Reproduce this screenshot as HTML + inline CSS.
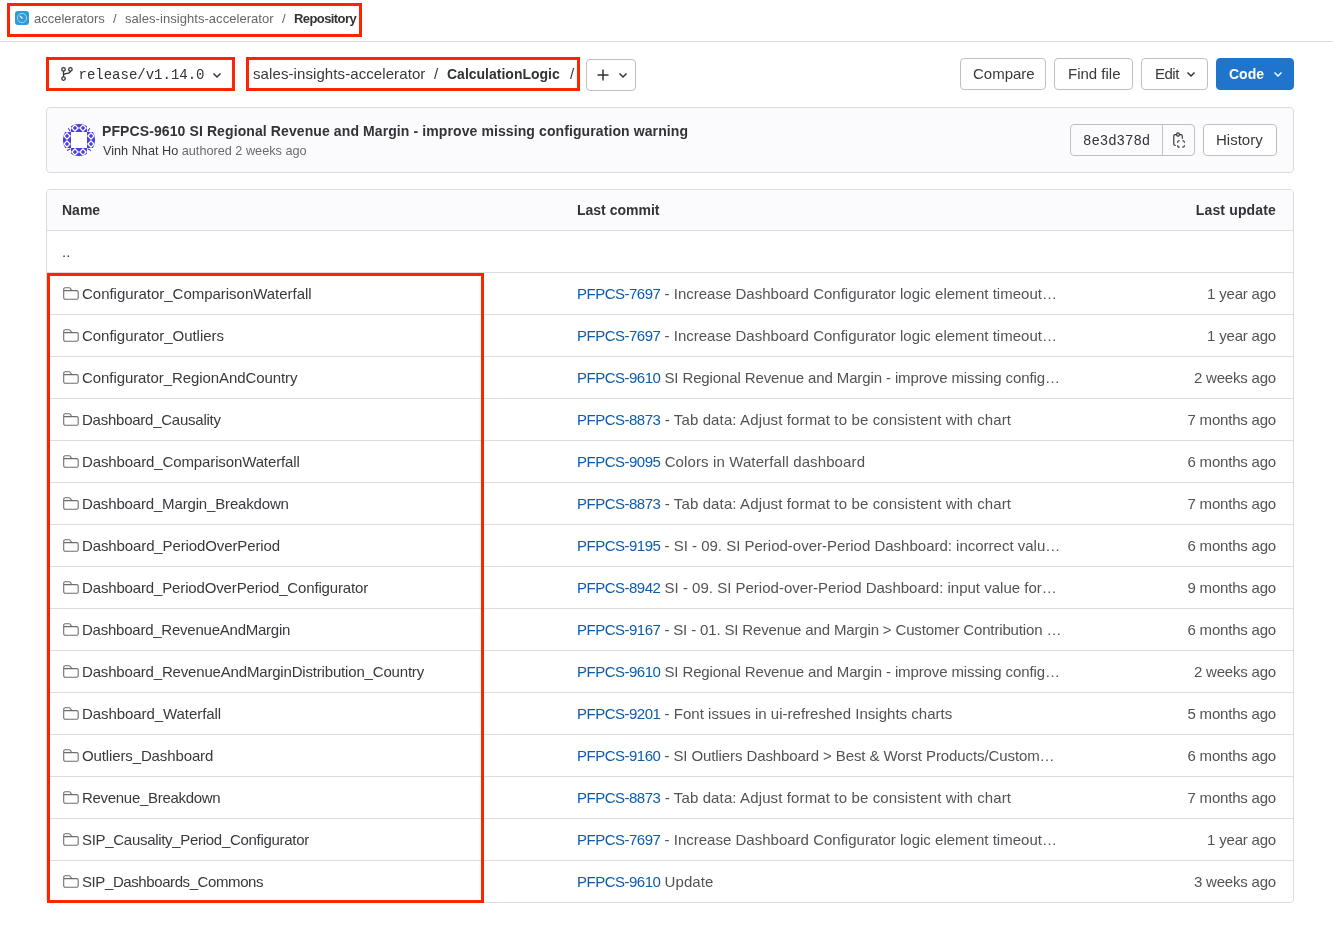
<!DOCTYPE html>
<html><head><meta charset="utf-8">
<style>
*{box-sizing:border-box;margin:0;padding:0}
html,body{width:1333px;height:952px;overflow:hidden;background:#fff}
#wrap{position:absolute;left:0;top:0;width:1333px;height:952px;will-change:transform}
body{font-family:"Liberation Sans",sans-serif;color:#3a383f;position:relative;font-size:15px}
.abs{position:absolute}
.red{position:absolute;border:3px solid #ff2400;pointer-events:none}
.hdr{position:absolute;left:0;top:0;width:1333px;height:42px;border-bottom:1px solid #dcdcde}
.bc{position:absolute;top:11px;font-size:13px;color:#66656b;white-space:nowrap;line-height:16px}
.btn{position:absolute;top:58px;height:32px;border:1px solid #bfbfc3;border-radius:4px;background:#fff;font-size:15px;line-height:30px;color:#3a383f;white-space:nowrap}
.btn span{position:absolute;top:0}
.chev{position:absolute}
.commit{position:absolute;left:46px;top:107px;width:1248px;height:66px;border:1px solid #dcdcde;border-radius:4px;background:#fbfafd}
.tbl{position:absolute;left:46px;top:189px;width:1248px;height:714px;border:1px solid #dcdcde;border-radius:4px;overflow:hidden}
.th{position:absolute;left:0;top:0;width:1246px;height:41px;background:#fbfafd;border-bottom:1px solid #dcdcde}
.th b{position:absolute;top:12px;font-size:14px;line-height:16px;color:#333238}
.row{position:absolute;left:0;width:1246px;height:42px;border-bottom:1px solid #dcdcde}
.row .nm{position:absolute;left:35px;top:12px;font-size:15px;line-height:18px;color:#3a383f;white-space:nowrap}
.row .ic{position:absolute;left:16px;top:14px;overflow:visible}
.row .cm{position:absolute;left:530px;top:12px;font-size:15px;line-height:18px;color:#535258;white-space:nowrap}
.row .cm a{color:#0b5cad;text-decoration:none;letter-spacing:-0.5px}
.row .tm{position:absolute;right:17px;top:12px;font-size:15px;line-height:18px;color:#535258;white-space:nowrap;letter-spacing:-0.2px}
</style></head><body><div id="wrap">

<div class="hdr">
  <div class="abs" style="left:15px;top:11px;width:14px;height:14px;border-radius:3px;background:#2f9ad6">
    <svg width="14" height="14" viewBox="0 0 14 14" style="position:absolute;left:0;top:0"><circle cx="7" cy="7" r="4.6" fill="none" stroke="#bfe0f5" stroke-width="0.8"/><path d="M5.2 5.2 L7.2 7.2" stroke="#dff0fb" stroke-width="1.3" stroke-linecap="round"/></svg>
  </div>
  <div class="bc" style="left:34px">accelerators</div>
  <div class="bc" style="left:113px">/</div>
  <div class="bc" style="left:125px;letter-spacing:0.05px">sales-insights-accelerator</div>
  <div class="bc" style="left:282px">/</div>
  <div class="bc" style="left:294px;color:#333238;font-weight:bold;letter-spacing:-0.58px">Repository</div>
</div>
<div class="red" style="left:7px;top:3px;width:355px;height:34px"></div>

<!-- branch button -->
<div class="btn" style="left:46px;width:188px">
  <svg class="abs" style="left:10px;top:5px" width="20" height="20" viewBox="57 64 20 20"><g fill="none" stroke="#333238" stroke-width="1.25"><circle cx="63.5" cy="69.4" r="1.75"/><circle cx="70.4" cy="69.4" r="1.75"/><circle cx="63.5" cy="78.5" r="1.75"/><path d="M63.5 71.15V76.75"/><path d="M63.5 74.6C64.2 73.9 65.2 73.6 67.2 73.4C69.2 73.2 70.2 72.5 70.4 71.15"/></g></svg>
  <span style="left:31.5px;top:1px;font-family:'Liberation Mono',monospace;font-size:14px;color:#333238">release/v1.14.0</span>
  <svg class="chev" style="left:165px;top:10.5px" width="10" height="10" viewBox="0 0 10 10"><path d="M1.5 3.5L5 7L8.5 3.5" fill="none" stroke="#333238" stroke-width="1.5"/></svg>
</div>
<div class="red" style="left:46px;top:57px;width:189px;height:34px"></div>

<!-- path breadcrumb -->
<div class="abs" style="left:253px;top:65px;font-size:15px;line-height:18px;white-space:nowrap;color:#3a383f;letter-spacing:0.09px">sales-insights-accelerator</div>
<div class="abs" style="left:434px;top:65px;font-size:15px;line-height:18px;color:#3a383f">/</div>
<div class="abs" style="left:447px;top:65px;font-size:14px;line-height:18px;font-weight:bold;color:#333238">CalculationLogic</div>
<div class="abs" style="left:570px;top:65px;font-size:15px;line-height:18px;color:#3a383f">/</div>
<div class="red" style="left:246px;top:57px;width:334px;height:34px"></div>

<div class="btn" style="left:586px;width:50px;top:59px">
  <svg class="abs" style="left:10px;top:9px" width="12" height="12" viewBox="0 0 12 12"><path d="M6 0.5v11M0.5 6h11" stroke="#333238" stroke-width="1.5"/></svg>
  <svg class="chev" style="left:31px;top:10px" width="10" height="10" viewBox="0 0 10 10"><path d="M1.5 3.5L5 7L8.5 3.5" fill="none" stroke="#333238" stroke-width="1.5"/></svg>
</div>

<div class="btn" style="left:960px;width:86px"><span style="left:12px">Compare</span></div>
<div class="btn" style="left:1054px;width:79px"><span style="left:13px">Find file</span></div>
<div class="btn" style="left:1141px;width:67px"><span style="left:13px;letter-spacing:-0.5px">Edit</span>
  <svg class="chev" style="left:44px;top:10px" width="10" height="10" viewBox="0 0 10 10"><path d="M1.5 3.5L5 7L8.5 3.5" fill="none" stroke="#333238" stroke-width="1.5"/></svg></div>
<div class="btn" style="left:1216px;width:78px;background:#1f75cb;border-color:#1f75cb;color:#fff"><span style="left:12px;font-weight:bold;font-size:14px">Code</span>
  <svg class="chev" style="left:55.5px;top:10px" width="10" height="10" viewBox="0 0 10 10"><path d="M1.5 3.5L5 7L8.5 3.5" fill="none" stroke="#fff" stroke-width="1.5"/></svg></div>

<!-- commit box -->
<div class="commit">
  <svg class="abs" style="left:16px;top:15.5px" width="32" height="32" viewBox="0 0 32 32"><defs><clipPath id="av"><circle cx="16" cy="16" r="16"/></clipPath></defs><g clip-path="url(#av)"><rect width="32" height="32" fill="#fff"/><rect x="8" y="0" width="8" height="8" fill="#4b3de3"/><path d="M12 0.9L15.1 4L12 7.1L8.9 4Z" fill="none" stroke="#fff" stroke-width="1.3"/><circle cx="12" cy="4" r="1.1" fill="#4b3de3"/><rect x="16" y="0" width="8" height="8" fill="#4b3de3"/><path d="M20 0.9L23.1 4L20 7.1L16.9 4Z" fill="none" stroke="#fff" stroke-width="1.3"/><circle cx="20" cy="4" r="1.1" fill="#4b3de3"/><rect x="0" y="8" width="8" height="8" fill="#4b3de3"/><path d="M4 8.9L7.1 12L4 15.1L0.9 12Z" fill="none" stroke="#fff" stroke-width="1.3"/><circle cx="4" cy="12" r="1.1" fill="#4b3de3"/><rect x="0" y="16" width="8" height="8" fill="#4b3de3"/><path d="M4 16.9L7.1 20L4 23.1L0.9 20Z" fill="none" stroke="#fff" stroke-width="1.3"/><circle cx="4" cy="20" r="1.1" fill="#4b3de3"/><rect x="24" y="8" width="8" height="8" fill="#4b3de3"/><path d="M28 8.9L31.1 12L28 15.1L24.9 12Z" fill="none" stroke="#fff" stroke-width="1.3"/><circle cx="28" cy="12" r="1.1" fill="#4b3de3"/><rect x="24" y="16" width="8" height="8" fill="#4b3de3"/><path d="M28 16.9L31.1 20L28 23.1L24.9 20Z" fill="none" stroke="#fff" stroke-width="1.3"/><circle cx="28" cy="20" r="1.1" fill="#4b3de3"/><rect x="8" y="24" width="8" height="8" fill="#4b3de3"/><path d="M12 24.9L15.1 28L12 31.1L8.9 28Z" fill="none" stroke="#fff" stroke-width="1.3"/><circle cx="12" cy="28" r="1.1" fill="#4b3de3"/><rect x="16" y="24" width="8" height="8" fill="#4b3de3"/><path d="M20 24.9L23.1 28L20 31.1L16.9 28Z" fill="none" stroke="#fff" stroke-width="1.3"/><circle cx="20" cy="28" r="1.1" fill="#4b3de3"/><path d="M5.2 4.2L6.9 6.9M26.8 4.2L25.1 6.9M4.2 26.6L6.9 25.1M27.8 26.6L25.1 25.1" stroke="#4b3de3" stroke-width="1.1" stroke-linecap="round"/></g><circle cx="16" cy="16" r="15.75" fill="none" stroke="rgba(0,0,0,0.06)" stroke-width="0.5"/></svg>
  <div class="abs" style="left:55px;top:14px;font-size:14px;line-height:18px;font-weight:bold;color:#333238;white-space:nowrap;letter-spacing:0.1px">PFPCS-9610 SI Regional Revenue and Margin - improve missing configuration warning</div>
  <div class="abs" style="left:56px;top:35px;font-size:12.7px;line-height:16px;color:#6a696f;white-space:nowrap"><span style="color:#3a383f">Vinh Nhat Ho</span> authored 2 weeks ago</div>
  <div class="abs" style="left:1023px;top:16px;width:93px;height:32px;border:1px solid #bfbfc3;border-radius:4px 0 0 4px;background:#fbfafd;font-family:'Liberation Mono',monospace;font-size:14px;line-height:30px;color:#333238;padding-left:12px;padding-top:1px">8e3d378d</div>
  <div class="abs" style="left:1115px;top:16px;width:33px;height:32px;border:1px solid #bfbfc3;border-radius:0 4px 4px 0;background:#fbfafd"></div>
  <svg class="abs" style="left:1119px;top:20px" width="26" height="24" viewBox="1166 128 26 24"><g fill="none" stroke="#333238" stroke-width="1.15" stroke-linecap="round"><path d="M1175.3 145.3H1175.1A1.3 1.3 0 0 1 1173.8 144V135.9A1.3 1.3 0 0 1 1175.1 134.6H1176.4"/><path d="M1179.6 134.6H1181A1.3 1.3 0 0 1 1182.3 135.9V138.3"/><rect x="1176.7" y="132.9" width="2.6" height="3.2" rx="1"/><path d="M1177.7 142.3V141.9A1.2 1.2 0 0 1 1178.9 140.7H1179.3"/><path d="M1182.7 140.7H1183.1A1.2 1.2 0 0 1 1184.3 141.9V142.3"/><path d="M1184.3 145.5V145.9A1.2 1.2 0 0 1 1183.1 147.1H1182.7"/><path d="M1179.3 147.1H1178.9A1.2 1.2 0 0 1 1177.7 145.9V145.5"/></g></svg>
  <div class="abs" style="left:1156px;top:16px;width:74px;height:32px;border:1px solid #bfbfc3;border-radius:4px;background:#fff;font-size:15px;line-height:30px;color:#3a383f;padding-left:12px">History</div>
</div>

<!-- table -->
<div class="tbl">
  <div class="th"><b style="left:15px">Name</b><b style="left:530px">Last commit</b><b style="right:17px;letter-spacing:0.15px">Last update</b></div>
  <div class="row" style="top:41px"><div class="nm" style="left:15px">..</div></div>
  <!--ROWS-->
  <div class="row" style="top:83px"><svg class="ic" width="16" height="16" viewBox="0 0 16 16"><path d="M0.7 3.6V2.2A1.5 1.5 0 0 1 2.2 0.7H6.2Q6.8 0.7 7.2 1.3L8.8 3.6H13.7A1.5 1.5 0 0 1 15.2 5.1V10.7A1.5 1.5 0 0 1 13.7 12.2H2.2A1.5 1.5 0 0 1 0.7 10.7ZM0.7 3.6H8.8" fill="none" stroke="#6e6d73" stroke-width="1.1" stroke-linejoin="round"/></svg><div class="nm" style="letter-spacing:-0.023px">Configurator_ComparisonWaterfall</div><div class="cm"><a>PFPCS-7697</a><span style="letter-spacing:0.009px"> - Increase Dashboard Configurator logic element timeout&#8230;</span></div><div class="tm">1 year ago</div></div>
  <div class="row" style="top:125px"><svg class="ic" width="16" height="16" viewBox="0 0 16 16"><path d="M0.7 3.6V2.2A1.5 1.5 0 0 1 2.2 0.7H6.2Q6.8 0.7 7.2 1.3L8.8 3.6H13.7A1.5 1.5 0 0 1 15.2 5.1V10.7A1.5 1.5 0 0 1 13.7 12.2H2.2A1.5 1.5 0 0 1 0.7 10.7ZM0.7 3.6H8.8" fill="none" stroke="#6e6d73" stroke-width="1.1" stroke-linejoin="round"/></svg><div class="nm" style="letter-spacing:-0.030px">Configurator_Outliers</div><div class="cm"><a>PFPCS-7697</a><span style="letter-spacing:0.009px"> - Increase Dashboard Configurator logic element timeout&#8230;</span></div><div class="tm">1 year ago</div></div>
  <div class="row" style="top:167px"><svg class="ic" width="16" height="16" viewBox="0 0 16 16"><path d="M0.7 3.6V2.2A1.5 1.5 0 0 1 2.2 0.7H6.2Q6.8 0.7 7.2 1.3L8.8 3.6H13.7A1.5 1.5 0 0 1 15.2 5.1V10.7A1.5 1.5 0 0 1 13.7 12.2H2.2A1.5 1.5 0 0 1 0.7 10.7ZM0.7 3.6H8.8" fill="none" stroke="#6e6d73" stroke-width="1.1" stroke-linejoin="round"/></svg><div class="nm" style="letter-spacing:-0.075px">Configurator_RegionAndCountry</div><div class="cm"><a>PFPCS-9610</a><span style="letter-spacing:-0.116px"> SI Regional Revenue and Margin - improve missing config&#8230;</span></div><div class="tm">2 weeks ago</div></div>
  <div class="row" style="top:209px"><svg class="ic" width="16" height="16" viewBox="0 0 16 16"><path d="M0.7 3.6V2.2A1.5 1.5 0 0 1 2.2 0.7H6.2Q6.8 0.7 7.2 1.3L8.8 3.6H13.7A1.5 1.5 0 0 1 15.2 5.1V10.7A1.5 1.5 0 0 1 13.7 12.2H2.2A1.5 1.5 0 0 1 0.7 10.7ZM0.7 3.6H8.8" fill="none" stroke="#6e6d73" stroke-width="1.1" stroke-linejoin="round"/></svg><div class="nm" style="letter-spacing:-0.245px">Dashboard_Causality</div><div class="cm"><a>PFPCS-8873</a><span style="letter-spacing:0.124px"> - Tab data: Adjust format to be consistent with chart</span></div><div class="tm">7 months ago</div></div>
  <div class="row" style="top:251px"><svg class="ic" width="16" height="16" viewBox="0 0 16 16"><path d="M0.7 3.6V2.2A1.5 1.5 0 0 1 2.2 0.7H6.2Q6.8 0.7 7.2 1.3L8.8 3.6H13.7A1.5 1.5 0 0 1 15.2 5.1V10.7A1.5 1.5 0 0 1 13.7 12.2H2.2A1.5 1.5 0 0 1 0.7 10.7ZM0.7 3.6H8.8" fill="none" stroke="#6e6d73" stroke-width="1.1" stroke-linejoin="round"/></svg><div class="nm" style="letter-spacing:-0.121px">Dashboard_ComparisonWaterfall</div><div class="cm"><a>PFPCS-9095</a><span style="letter-spacing:0.118px"> Colors in Waterfall dashboard</span></div><div class="tm">6 months ago</div></div>
  <div class="row" style="top:293px"><svg class="ic" width="16" height="16" viewBox="0 0 16 16"><path d="M0.7 3.6V2.2A1.5 1.5 0 0 1 2.2 0.7H6.2Q6.8 0.7 7.2 1.3L8.8 3.6H13.7A1.5 1.5 0 0 1 15.2 5.1V10.7A1.5 1.5 0 0 1 13.7 12.2H2.2A1.5 1.5 0 0 1 0.7 10.7ZM0.7 3.6H8.8" fill="none" stroke="#6e6d73" stroke-width="1.1" stroke-linejoin="round"/></svg><div class="nm" style="letter-spacing:-0.160px">Dashboard_Margin_Breakdown</div><div class="cm"><a>PFPCS-8873</a><span style="letter-spacing:0.124px"> - Tab data: Adjust format to be consistent with chart</span></div><div class="tm">7 months ago</div></div>
  <div class="row" style="top:335px"><svg class="ic" width="16" height="16" viewBox="0 0 16 16"><path d="M0.7 3.6V2.2A1.5 1.5 0 0 1 2.2 0.7H6.2Q6.8 0.7 7.2 1.3L8.8 3.6H13.7A1.5 1.5 0 0 1 15.2 5.1V10.7A1.5 1.5 0 0 1 13.7 12.2H2.2A1.5 1.5 0 0 1 0.7 10.7ZM0.7 3.6H8.8" fill="none" stroke="#6e6d73" stroke-width="1.1" stroke-linejoin="round"/></svg><div class="nm" style="letter-spacing:-0.112px">Dashboard_PeriodOverPeriod</div><div class="cm"><a>PFPCS-9195</a><span style="letter-spacing:-0.005px"> - SI - 09. SI Period-over-Period Dashboard: incorrect valu&#8230;</span></div><div class="tm">6 months ago</div></div>
  <div class="row" style="top:377px"><svg class="ic" width="16" height="16" viewBox="0 0 16 16"><path d="M0.7 3.6V2.2A1.5 1.5 0 0 1 2.2 0.7H6.2Q6.8 0.7 7.2 1.3L8.8 3.6H13.7A1.5 1.5 0 0 1 15.2 5.1V10.7A1.5 1.5 0 0 1 13.7 12.2H2.2A1.5 1.5 0 0 1 0.7 10.7ZM0.7 3.6H8.8" fill="none" stroke="#6e6d73" stroke-width="1.1" stroke-linejoin="round"/></svg><div class="nm" style="letter-spacing:-0.147px">Dashboard_PeriodOverPeriod_Configurator</div><div class="cm"><a>PFPCS-8942</a><span style="letter-spacing:0.007px"> SI - 09. SI Period-over-Period Dashboard: input value for&#8230;</span></div><div class="tm">9 months ago</div></div>
  <div class="row" style="top:419px"><svg class="ic" width="16" height="16" viewBox="0 0 16 16"><path d="M0.7 3.6V2.2A1.5 1.5 0 0 1 2.2 0.7H6.2Q6.8 0.7 7.2 1.3L8.8 3.6H13.7A1.5 1.5 0 0 1 15.2 5.1V10.7A1.5 1.5 0 0 1 13.7 12.2H2.2A1.5 1.5 0 0 1 0.7 10.7ZM0.7 3.6H8.8" fill="none" stroke="#6e6d73" stroke-width="1.1" stroke-linejoin="round"/></svg><div class="nm" style="letter-spacing:-0.236px">Dashboard_RevenueAndMargin</div><div class="cm"><a>PFPCS-9167</a><span style="letter-spacing:-0.151px"> - SI - 01. SI Revenue and Margin &gt; Customer Contribution &#8230;</span></div><div class="tm">6 months ago</div></div>
  <div class="row" style="top:461px"><svg class="ic" width="16" height="16" viewBox="0 0 16 16"><path d="M0.7 3.6V2.2A1.5 1.5 0 0 1 2.2 0.7H6.2Q6.8 0.7 7.2 1.3L8.8 3.6H13.7A1.5 1.5 0 0 1 15.2 5.1V10.7A1.5 1.5 0 0 1 13.7 12.2H2.2A1.5 1.5 0 0 1 0.7 10.7ZM0.7 3.6H8.8" fill="none" stroke="#6e6d73" stroke-width="1.1" stroke-linejoin="round"/></svg><div class="nm" style="letter-spacing:-0.178px">Dashboard_RevenueAndMarginDistribution_Country</div><div class="cm"><a>PFPCS-9610</a><span style="letter-spacing:-0.116px"> SI Regional Revenue and Margin - improve missing config&#8230;</span></div><div class="tm">2 weeks ago</div></div>
  <div class="row" style="top:503px"><svg class="ic" width="16" height="16" viewBox="0 0 16 16"><path d="M0.7 3.6V2.2A1.5 1.5 0 0 1 2.2 0.7H6.2Q6.8 0.7 7.2 1.3L8.8 3.6H13.7A1.5 1.5 0 0 1 15.2 5.1V10.7A1.5 1.5 0 0 1 13.7 12.2H2.2A1.5 1.5 0 0 1 0.7 10.7ZM0.7 3.6H8.8" fill="none" stroke="#6e6d73" stroke-width="1.1" stroke-linejoin="round"/></svg><div class="nm" style="letter-spacing:-0.067px">Dashboard_Waterfall</div><div class="cm"><a>PFPCS-9201</a><span style="letter-spacing:0.021px"> - Font issues in ui-refreshed Insights charts</span></div><div class="tm">5 months ago</div></div>
  <div class="row" style="top:545px"><svg class="ic" width="16" height="16" viewBox="0 0 16 16"><path d="M0.7 3.6V2.2A1.5 1.5 0 0 1 2.2 0.7H6.2Q6.8 0.7 7.2 1.3L8.8 3.6H13.7A1.5 1.5 0 0 1 15.2 5.1V10.7A1.5 1.5 0 0 1 13.7 12.2H2.2A1.5 1.5 0 0 1 0.7 10.7ZM0.7 3.6H8.8" fill="none" stroke="#6e6d73" stroke-width="1.1" stroke-linejoin="round"/></svg><div class="nm" style="letter-spacing:-0.123px">Outliers_Dashboard</div><div class="cm"><a>PFPCS-9160</a><span style="letter-spacing:-0.095px"> - SI Outliers Dashboard &gt; Best &amp; Worst Products/Custom&#8230;</span></div><div class="tm">6 months ago</div></div>
  <div class="row" style="top:587px"><svg class="ic" width="16" height="16" viewBox="0 0 16 16"><path d="M0.7 3.6V2.2A1.5 1.5 0 0 1 2.2 0.7H6.2Q6.8 0.7 7.2 1.3L8.8 3.6H13.7A1.5 1.5 0 0 1 15.2 5.1V10.7A1.5 1.5 0 0 1 13.7 12.2H2.2A1.5 1.5 0 0 1 0.7 10.7ZM0.7 3.6H8.8" fill="none" stroke="#6e6d73" stroke-width="1.1" stroke-linejoin="round"/></svg><div class="nm" style="letter-spacing:-0.300px">Revenue_Breakdown</div><div class="cm"><a>PFPCS-8873</a><span style="letter-spacing:0.124px"> - Tab data: Adjust format to be consistent with chart</span></div><div class="tm">7 months ago</div></div>
  <div class="row" style="top:629px"><svg class="ic" width="16" height="16" viewBox="0 0 16 16"><path d="M0.7 3.6V2.2A1.5 1.5 0 0 1 2.2 0.7H6.2Q6.8 0.7 7.2 1.3L8.8 3.6H13.7A1.5 1.5 0 0 1 15.2 5.1V10.7A1.5 1.5 0 0 1 13.7 12.2H2.2A1.5 1.5 0 0 1 0.7 10.7ZM0.7 3.6H8.8" fill="none" stroke="#6e6d73" stroke-width="1.1" stroke-linejoin="round"/></svg><div class="nm" style="letter-spacing:-0.300px">SIP_Causality_Period_Configurator</div><div class="cm"><a>PFPCS-7697</a><span style="letter-spacing:0.009px"> - Increase Dashboard Configurator logic element timeout&#8230;</span></div><div class="tm">1 year ago</div></div>
  <div class="row" style="top:671px"><svg class="ic" width="16" height="16" viewBox="0 0 16 16"><path d="M0.7 3.6V2.2A1.5 1.5 0 0 1 2.2 0.7H6.2Q6.8 0.7 7.2 1.3L8.8 3.6H13.7A1.5 1.5 0 0 1 15.2 5.1V10.7A1.5 1.5 0 0 1 13.7 12.2H2.2A1.5 1.5 0 0 1 0.7 10.7ZM0.7 3.6H8.8" fill="none" stroke="#6e6d73" stroke-width="1.1" stroke-linejoin="round"/></svg><div class="nm" style="letter-spacing:-0.409px">SIP_Dashboards_Commons</div><div class="cm"><a>PFPCS-9610</a><span style="letter-spacing:0.056px"> Update</span></div><div class="tm">3 weeks ago</div></div>
  <!--/ROWS-->
</div>
<div class="red" style="left:47px;top:273px;width:437px;height:630px"></div>
</div></body></html>
